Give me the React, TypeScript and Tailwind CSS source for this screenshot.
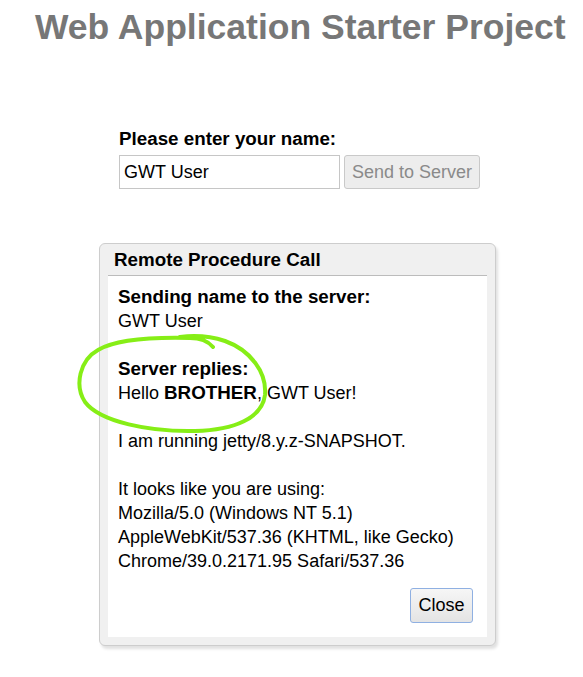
import { useState } from "react";

const lines: { text: React.ReactNode; bold?: boolean }[] = [
  { text: "Sending name to the server:", bold: true },
  { text: "GWT User" },
  { text: "\u00a0" },
  { text: "Server replies:", bold: true },
  {
    text: (
      <>
        Hello <b className="text-[18.8px]">BROTHER</b>, GWT User!
      </>
    ),
  },
  { text: "\u00a0" },
  { text: "I am running jetty/8.y.z-SNAPSHOT." },
  { text: "\u00a0" },
  { text: "It looks like you are using:" },
  { text: "Mozilla/5.0 (Windows NT 5.1)" },
  { text: "AppleWebKit/537.36 (KHTML, like Gecko)" },
  { text: "Chrome/39.0.2171.95 Safari/537.36" },
];

const App = () => {
  const [name, setName] = useState("GWT User");

  return (
    <div className="relative min-h-[677px] bg-white font-['Liberation_Sans',Arial,sans-serif] text-[18px] text-black">
      <h1 className="pl-[35px] pt-[10px] text-[35.5px] font-bold leading-[35px] text-[#777777]">
        Web Application Starter Project
      </h1>

      <div className="ml-[119px] mt-[82px]">
        <div className="text-[18.8px] font-bold leading-[24px]">Please enter your name:</div>
        <div className="mt-[4px] flex gap-[4px]">
          <input
            value={name}
            onChange={(e) => setName(e.target.value)}
            className="h-[34px] w-[221px] border border-[#c6c6c6] bg-white pl-[4px] text-[18px] outline-none"
          />
          <button
            disabled
            className="h-[34px] w-[136px] rounded-[3px] border border-[#c9c9c9] bg-[#ededed] text-[18px] text-[#8a8a8a]"
          >
            Send to Server
          </button>
        </div>
      </div>

      <div className="ml-[99px] mt-[54px] w-[397px] rounded-[6px] border border-[#cdcdcd] bg-[#f0f0f0] shadow-[2px_3px_3px_rgba(0,0,0,0.12)]">
        <div className="h-[31px] pl-[14px] pt-[4px] text-[18.8px] font-bold leading-[24px]">
          Remote Procedure Call
        </div>
        <div className="mx-[8px] mb-[8px] border-t border-[#bcbcbc] bg-white">
          <div className="pl-[10px] pt-[9px]">
            {lines.map((l, i) => (
              <div
                key={i}
                className={l.bold ? "text-[18.8px] font-bold leading-[24px]" : "leading-[24px]"}
              >
                {l.text}
              </div>
            ))}
          </div>
          <div className="mt-[15px] flex justify-end pb-[14px] pr-[14px]">
            <button className="h-[35px] w-[63px] rounded-[3px] border border-[#8fb0e2] bg-gradient-to-b from-[#f6f6f6] to-[#e4e4e4] text-[18px] text-black">
              Close
            </button>
          </div>
        </div>
      </div>

      {/* hand-drawn highlight over the reply */}
      <svg
        className="pointer-events-none absolute left-0 top-0"
        width="583"
        height="677"
        viewBox="0 0 583 677"
        fill="none"
      >
        <path
          d="M213 347 C 208 341, 200 338, 190 338 C 150 337, 115 340, 98 350 C 80 360, 74 385, 85 402 C 100 422, 150 432, 195 431 C 235 430, 262 418, 265 395 C 267 372, 250 350, 225 341 C 210 336, 195 335, 180 337"
          stroke="#86ee16"
          strokeWidth="4"
          strokeLinecap="round"
          strokeLinejoin="round"
        />
      </svg>
    </div>
  );
};

export default App;
